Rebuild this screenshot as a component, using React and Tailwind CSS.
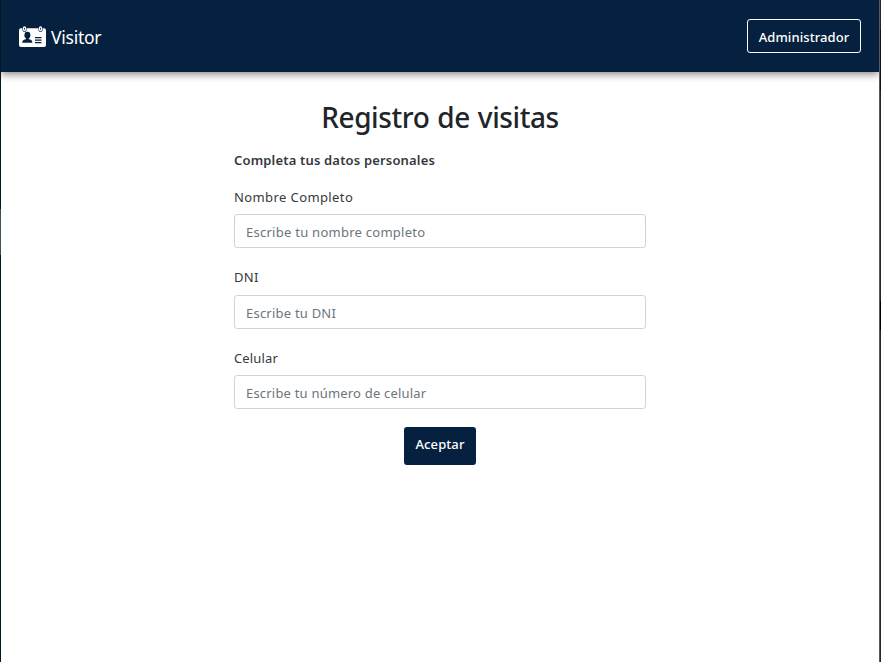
const fields = [
  { id: "name", label: "Nombre Completo", hint: "Escribe tu nombre completo", spacing: "tracking-[0.4px]", hintGap: "tracking-[0.26px]", margin: "mt-[7px]", inputMargin: "mt-[7px]" },
  { id: "dni", label: "DNI", hint: "Escribe tu DNI", spacing: "tracking-[0.3px]", hintGap: "tracking-[0.22px]", margin: "mt-[19px]", inputMargin: "mt-[8px]" },
  { id: "phone", label: "Celular", hint: "Escribe tu número de celular", spacing: "tracking-[0.15px]", hintGap: "tracking-[0.2px]", margin: "mt-[19px]", inputMargin: "mt-[7px]" },
];

function BadgeIcon() {
  return (
    <svg width="27" height="22" viewBox="0 0 27 22" className="mt-[2px] shrink-0">
      <rect x="0" y="2.2" width="27" height="18.8" rx="2" fill="#fff" />
      <path d="M3.5 2v2.4q0 1.3 2 1.3t2-1.3V2zM19.5 2v2.4q0 1.3 2 1.3t2-1.3V2z" fill="#06213f" />
      <rect x="3.9" y="0.2" width="3.2" height="4.9" rx="1.5" fill="#fff" />
      <rect x="19.9" y="0.2" width="3.2" height="4.9" rx="1.5" fill="#fff" />
      <g fill="#06213f">
        <path d="M5.1 1.8h0.8v2h-0.8zM21.1 1.8h0.8v2h-0.8z" />
        <ellipse cx="8.4" cy="9.2" rx="3" ry="3.4" />
        <path d="M7 11h2.8v2.2c2.2.3 3.6 1.2 3.6 3.6H3.2c0-2.4 1.6-3.3 3.8-3.6z" />
        <path d="M16 11.1h6.5v1.1H16zM16 13.6h6.5v1.1H16zM16 16.1h6.5v1.1H16z" />
      </g>
    </svg>
  );
}

export default function App() {
  return (
    <div className="flex h-[662px] w-[881px] overflow-hidden font-['Noto_Sans','Open_Sans',sans-serif]">
      <div className="flex w-px shrink-0 flex-col bg-[#001a26]">
        <div className="mt-[209px] h-[46px] bg-[#3c5158]" />
      </div>
      <div className="flex w-[878px] shrink-0 flex-col overflow-hidden bg-white">
        <header className="flex h-[72px] shrink-0 items-center justify-between bg-[#06213f] px-[18px] text-white shadow-[0_2px_8px_rgba(0,0,0,0.5)]">
          <div className="flex items-center gap-[5px]">
            <BadgeIcon />
            <span className="pt-px text-[17.5px] leading-6 tracking-[-0.25px]">Visitor</span>
          </div>
          <button className="h-[34px] w-[114px] rounded-[3px] border border-white pt-[2px] text-[13px] leading-5 font-medium tracking-[0.08px] whitespace-nowrap">
            Administrador
          </button>
        </header>
        <main className="ml-[233px] flex w-[412px] flex-col text-[#212529]">
          <h1 className="mt-[25px] text-center text-[28px] leading-10 font-medium tracking-[-0.4px] [word-spacing:1px] whitespace-nowrap">
            Registro de visitas
          </h1>
          <p className="mt-[13px] text-[13px] leading-5 font-semibold tracking-[0.17px] whitespace-nowrap text-[#343a40]">
            Completa tus datos personales
          </p>
          <form className="flex flex-col pt-[10px]">
            {fields.map((f) => (
              <div key={f.id} className={`flex flex-col ${f.margin}`}>
                <label htmlFor={f.id} className={`text-[13px] leading-5 text-[#343a40] ${f.spacing}`}>
                  {f.label}
                </label>
                <input
                  id={f.id}
                  placeholder={f.hint}
                  className={`h-[34px] w-full rounded-[3px] border border-[#ced4da] px-[11px] pt-px text-[13px] placeholder:text-[#6c757d] ${f.inputMargin} ${f.hintGap}`}
                />
              </div>
            ))}
            <button
              type="button"
              className="mt-[18px] h-[38px] w-[72px] self-center rounded-[3px] bg-[#06213f] pb-[4px] text-[13px] leading-5 font-medium tracking-[0.1px] text-white"
            >
              Aceptar
            </button>
          </form>
        </main>
      </div>
      <div className="w-px shrink-0 bg-[#59595b]" />
      <div className="flex w-px shrink-0 flex-col bg-[#252729]">
        <div className="mt-[30px] h-[60px] bg-[#111214]" />
        <div className="mt-[211px] h-[29px] bg-black" />
      </div>
    </div>
  );
}
